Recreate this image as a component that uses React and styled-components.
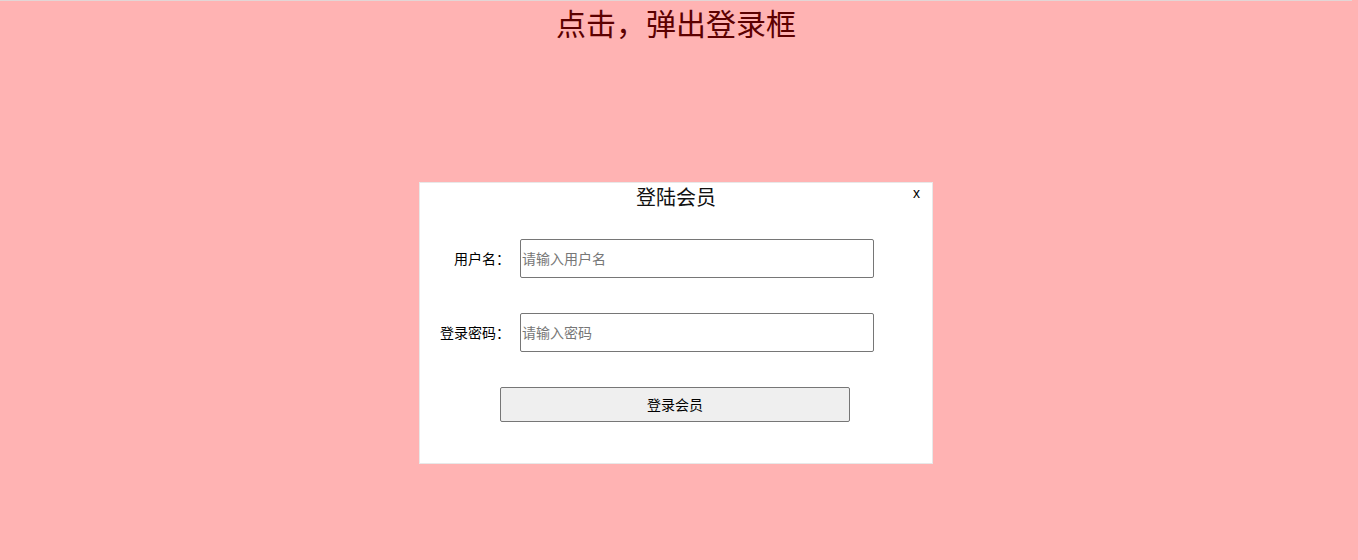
import { useState } from "react";
import styled, { createGlobalStyle } from "styled-components";

const GlobalStyle = createGlobalStyle`
    html, body {
        margin: 0;
        padding: 0;
        height: 100%;
    }
    body {
        font-family: "Microsoft YaHei", "Noto Sans CJK SC", "Noto Sans", sans-serif;
        background: #ffb3b3;
    }
    #root {
        height: 100%;
    }
`

const Page = styled.div`
    box-sizing: border-box;
    height: 100%;
    width: calc(100% - 6px);
    border-top: 1px solid #e2d6d6;
    background: #ffb3b3;
`

const Title = styled.div`
    height: 47px;
    line-height: 43px;
    text-align: center;
    font-size: 30px;
    color: #5c0000;
    cursor: pointer;
`

const Modal = styled.div`
    position: relative;
    box-sizing: border-box;
    width: 514px;
    margin: 134px auto 0;
    padding-bottom: 41px;
    background: #fff;
    border: 1px solid #e8e8e8;
`

const ModalHeader = styled.div`
    height: 28px;
    line-height: 27px;
    text-align: center;
    font-size: 20px;
    color: #111;
`

const Close = styled.span`
    position: absolute;
    top: 1px;
    right: 12px;
    font-family: "Liberation Sans", Arial, sans-serif;
    font-size: 14px;
    line-height: 18px;
    color: #000;
    cursor: pointer;
`

const Form = styled.div`
    display: flex;
    flex-direction: column;
    gap: 35px;
    margin-top: 28px;
`

const Row = styled.div`
    display: flex;
    align-items: center;
`

const Label = styled.label`
    width: 90px;
    margin-right: 10px;
    text-align: right;
    font-size: 14px;
    line-height: 16px;
    padding-bottom: 2px;
    color: #000;
    white-space: nowrap;
`

const Input = styled.input`
    box-sizing: border-box;
    width: 354px;
    height: 39px;
    padding: 0 1px 2px;
    border: 1px solid #767676;
    border-radius: 2px;
    font-family: inherit;
    font-size: 14px;
    outline: 0;
    &::placeholder {
        color: #777;
    }
`

const Submit = styled.button`
    box-sizing: border-box;
    width: 350px;
    height: 35px;
    margin-left: 80px;
    padding: 0 0 1px;
    border: 1px solid #767676;
    border-radius: 2px;
    background: #efefef;
    font-family: inherit;
    font-size: 14px;
    color: #000;
    cursor: pointer;
`

function App() {
    const [open, setOpen] = useState(true);
    const [name, setName] = useState('');
    const [password, setPassword] = useState('');

    return (
        <Page>
            <GlobalStyle />
            <Title onClick={() => setOpen(true)}>点击，弹出登录框</Title>
            {open &&
                <Modal>
                    <ModalHeader>登陆会员</ModalHeader>
                    <Close onClick={() => setOpen(false)}>x</Close>
                    <Form>
                        <Row>
                            <Label>用户名：</Label>
                            <Input value={name} placeholder="请输入用户名"
                                onChange={e => setName(e.target.value)} />
                        </Row>
                        <Row>
                            <Label>登录密码：</Label>
                            <Input type="password" value={password} placeholder="请输入密码"
                                onChange={e => setPassword(e.target.value)} />
                        </Row>
                        <Row>
                            <Submit>登录会员</Submit>
                        </Row>
                    </Form>
                </Modal>
            }
        </Page>
    );
}

export default App;
